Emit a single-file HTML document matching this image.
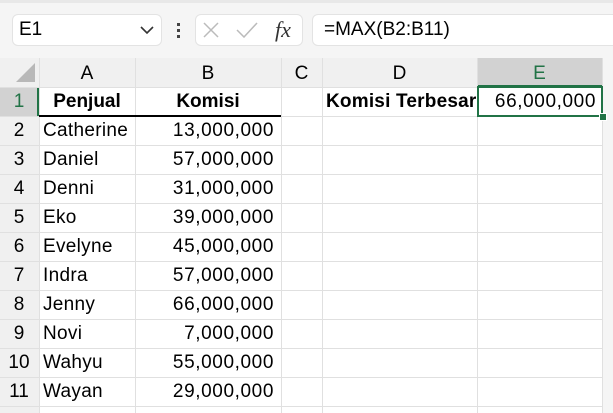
<!DOCTYPE html><html><head><style>
body{margin:0;width:613px;height:413px;overflow:hidden;background:#fff;font-family:"Liberation Sans",sans-serif;position:relative}
.a{position:absolute}
.top{left:0;top:0;width:613px;height:58px;background:#f5f5f5}
.c{position:absolute;font-size:19px;color:#000;line-height:29px;white-space:nowrap}
.n{letter-spacing:0.6px}
.vl{position:absolute;width:1px;background:#e0e0e0}
.hl{position:absolute;height:1px;background:#e0e0e0}
</style></head><body>
<div class="a top"></div>
<div class="a" style="left:0;top:0;width:613px;height:3px;background:#e8e8e8"></div>
<div class="a" style="left:12px;top:14px;width:150px;height:32px;background:#fff;border:1px solid #e3e3e3;border-radius:6px;box-sizing:border-box"></div>
<div class="a" style="left:19px;top:19px;font-size:19px">E1</div>
<svg class="a" style="left:140px;top:26px" width="14" height="9"><path d="M1 1 L7 7 L13 1" stroke="#333" stroke-width="1.6" fill="none"/></svg>
<div class="a" style="left:177px;top:23px;width:3px;height:3px;background:#444"></div>
<div class="a" style="left:177px;top:29px;width:3px;height:3px;background:#444"></div>
<div class="a" style="left:177px;top:35px;width:3px;height:3px;background:#444"></div>
<div class="a" style="left:195px;top:14px;width:108px;height:32px;background:#fff;border:1px solid #e3e3e3;border-radius:6px;box-sizing:border-box"></div>
<svg class="a" style="left:203px;top:22px" width="16" height="16"><path d="M1 1L15 15M15 1L1 15" stroke="#bbb" stroke-width="1.5"/></svg>
<svg class="a" style="left:236px;top:22px" width="22" height="16"><path d="M1 8L8 15L21 1" stroke="#bbb" stroke-width="1.5" fill="none"/></svg>
<div class="a" style="left:275px;top:17px;font-family:'Liberation Serif',serif;font-style:italic;font-size:22px;color:#333">fx</div>
<div class="a" style="left:312px;top:14px;width:310px;height:32px;background:#fff;border:1px solid #e3e3e3;border-radius:6px;box-sizing:border-box"></div>
<div class="a" style="left:324px;top:19px;font-size:19px">=MAX(B2:B11)</div>
<div class="a" style="left:0;top:58px;width:613px;height:29px;background:#f0f0f0"></div>
<div class="a" style="left:0;top:87px;width:39px;height:326px;background:#f0f0f0"></div>
<div class="a" style="left:477px;top:58px;width:125px;height:29px;background:#d2d2d2;border-bottom:2px solid #217346;box-sizing:border-box"></div>
<div class="a" style="left:0;top:87px;width:39px;height:29px;background:#d2d2d2;border-right:2px solid #217346;box-sizing:border-box"></div>
<div class="a" style="left:602px;top:58px;width:11px;height:355px;background:#f5f5f5"></div>
<svg class="a" style="left:16px;top:62px" width="20" height="21"><path d="M19 1L19 20L0 20Z" fill="#b8b8b8"/></svg>
<div class="c" style="left:39px;top:59px;width:96px;text-align:center">A</div>
<div class="c" style="left:135px;top:59px;width:146px;text-align:center">B</div>
<div class="c" style="left:281px;top:59px;width:41px;text-align:center">C</div>
<div class="c" style="left:322px;top:59px;width:155px;text-align:center">D</div>
<div class="c" style="left:477px;top:59px;width:125px;text-align:center;color:#217346">E</div>
<div class="vl" style="left:39px;top:58px;height:355px"></div>
<div class="vl" style="left:135px;top:58px;height:355px"></div>
<div class="vl" style="left:281px;top:58px;height:355px"></div>
<div class="vl" style="left:322px;top:58px;height:355px"></div>
<div class="vl" style="left:477px;top:58px;height:355px"></div>
<div class="vl" style="left:602px;top:58px;height:355px"></div>
<div id="g"></div>
<script>
var names=["Catherine","Daniel","Denni","Eko","Evelyne","Indra","Jenny","Novi","Wahyu","Wayan"];
var vals=["13,000,000","57,000,000","31,000,000","39,000,000","45,000,000","57,000,000","66,000,000","7,000,000","55,000,000","29,000,000"];
var h="";
for(var i=0;i<=11;i++){h+='<div class="hl" style="left:0;top:'+(87+29*i)+'px;width:602px"></div>';}
for(var r=1;r<=11;r++){var t=87+29*(r-1);
h+='<div class="c" style="left:0;top:'+t+'px;width:38px;text-align:center;'+(r==1?'color:#217346':'')+'">'+r+'</div>';
if(r>1){h+='<div class="c" style="left:43px;top:'+t+'px;letter-spacing:0.3px">'+names[r-2]+'</div>';
h+='<div class="c n" style="left:135px;top:'+t+'px;width:139px;text-align:right">'+vals[r-2]+'</div>';}}
document.getElementById("g").innerHTML=h;
</script>
<div class="a" style="left:39px;top:115px;width:242px;height:2px;background:#000"></div>
<div class="c" style="left:39px;top:87px;width:96px;text-align:center;font-weight:bold">Penjual</div>
<div class="c" style="left:135px;top:87px;width:146px;text-align:center;font-weight:bold">Komisi</div>
<div class="c" style="left:326px;top:87px;font-weight:bold;letter-spacing:0.2px">Komisi Terbesar</div>
<div class="a" style="left:477px;top:86px;width:126px;height:31px;border:2px solid #217346;box-sizing:border-box"></div>
<div class="a" style="left:599px;top:113px;width:6px;height:6px;background:#217346;border:1px solid #fff"></div>
<div class="c n" style="left:477px;top:87px;width:119px;text-align:right">66,000,000</div>
</body></html>
